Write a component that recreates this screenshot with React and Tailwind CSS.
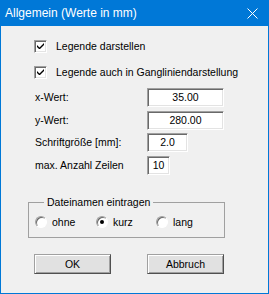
import React from 'react';

const sunken =
  'border border-t-[#a0a0a0] border-l-[#a0a0a0] border-b-white border-r-white shadow-[inset_1px_1px_0_#696969,inset_-1px_-1px_0_#e3e3e3] bg-white';

function CheckBox({ label, checked }) {
  return (
    <div className="flex items-center h-[13px] pl-[33px]">
      <div className={`w-[13px] h-[13px] flex items-center justify-center ${sunken}`}>
        {checked && (
          <svg width="7" height="7" viewBox="0 0 7 7">
            <path d="M0 2 L0 4 L2 6 L3 6 L7 2 L7 0 L2.5 4.5 Z" fill="#000" />
          </svg>
        )}
      </div>
      <span className="ml-[9px] leading-none">{label}</span>
    </div>
  );
}

function Field({ label, value, width, className = '' }) {
  return (
    <div className={`flex items-center h-[19px] pl-[34px] ${className}`}>
      <span className="w-[112px] leading-none">{label}</span>
      <div className={`h-[19px] flex items-center justify-center leading-none ${sunken} ${width}`}>
        {value}
      </div>
    </div>
  );
}

function Radio({ label, checked, width }) {
  return (
    <div className={`flex items-center h-[12px] ${width}`}>
      <div className={`w-[12px] h-[12px] rounded-full flex items-center justify-center border border-t-[#a0a0a0] border-l-[#a0a0a0] border-b-white border-r-white shadow-[inset_1px_1px_0_#696969] bg-white`}>
        {checked && <div className="w-[4px] h-[4px] rounded-full bg-black" />}
      </div>
      <span className="ml-[5px] leading-none">{label}</span>
    </div>
  );
}

function Btn({ children }) {
  return (
    <button className="w-[77px] h-[20px] bg-[#e1e1e1] border border-t-[#a0a0a0] border-l-[#a0a0a0] border-b-[#505050] border-r-[#505050] shadow-[inset_1px_1px_0_#fff,inset_-1px_-1px_0_#a0a0a0] leading-none text-black">
      {children}
    </button>
  );
}

export default function App() {
  return (
    <div className="w-[269px] h-[294px] flex flex-col bg-[#f0f0f0] border-x border-b border-[#0078d7] text-[10.5px] text-black font-['Liberation_Sans',Arial,sans-serif]">
      <div className="h-[26px] shrink-0 bg-[#0078d7] flex items-center justify-between pl-[4px] pr-[10px]">
        <span className="text-white text-[12px] leading-none">Allgemein (Werte in mm)</span>
        <svg width="11" height="11" viewBox="0 0 11 11">
          <path d="M0.5 0.5 L10.5 10.5 M10.5 0.5 L0.5 10.5" stroke="#fff" strokeWidth="1" />
        </svg>
      </div>

      <div className="mt-[14px]">
        <CheckBox label="Legende darstellen" checked />
      </div>
      <div className="mt-[13px]">
        <CheckBox label="Legende auch in Gangliniendarstellung" checked />
      </div>

      <Field className="mt-[9px]" label="x-Wert:" value="35.00" width="w-[77px]" />
      <Field className="mt-[4px]" label="y-Wert:" value="280.00" width="w-[77px]" />
      <Field className="mt-[3px]" label="Schriftgröße [mm]:" value="2.0" width="w-[41px]" />
      <Field className="mt-[4px]" label="max. Anzahl Zeilen" value="10" width="w-[23px]" />

      <fieldset className="mt-[21px] ml-[27px] w-[197px] border border-[#a0a0a0] pt-[8px] pb-[9px] pl-[6px]">
        <legend className="ml-[9px] px-[3px] leading-[12px]">Dateinamen eintragen</legend>
        <div className="flex">
          <Radio label="ohne" width="w-[61px]" />
          <Radio label="kurz" checked width="w-[60px]" />
          <Radio label="lang" width="w-[60px]" />
        </div>
      </fieldset>

      <div className="mt-[16px] flex pl-[33px] gap-[36px]">
        <Btn>OK</Btn>
        <Btn>Abbruch</Btn>
      </div>
    </div>
  );
}
